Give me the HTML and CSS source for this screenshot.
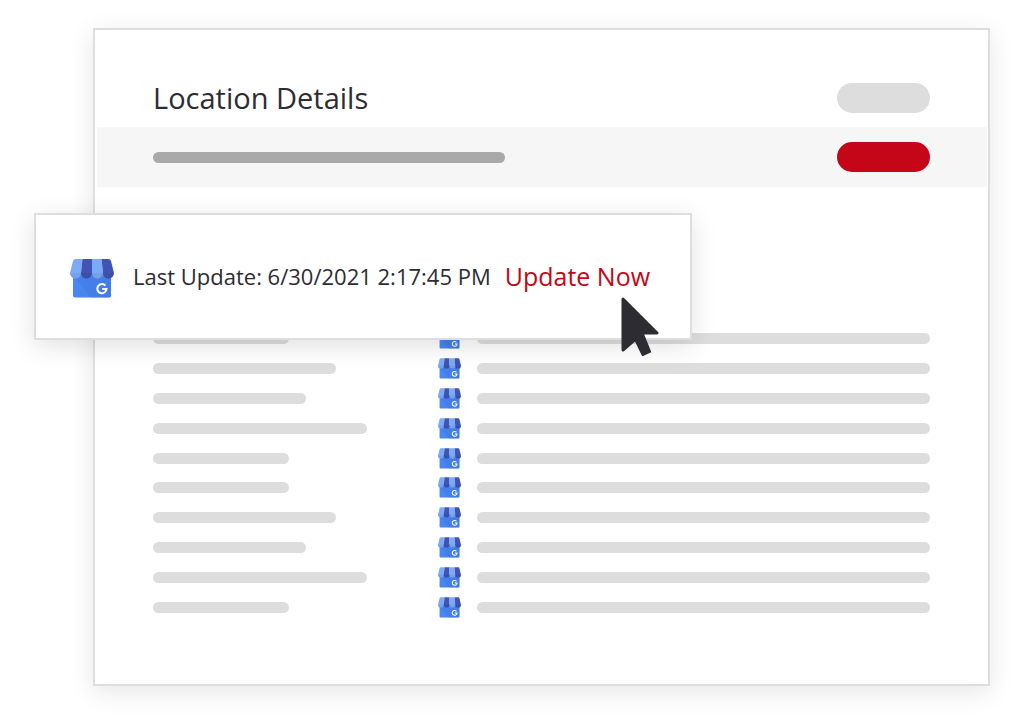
FILE: index.html
```
<!DOCTYPE html>
<html lang="en">
<head>
<meta charset="utf-8">
<meta name="viewport" content="width=device-width, initial-scale=1">
<title>Location Details</title>
<link rel="stylesheet" href="styles.css">
</head>
<body>
<svg class="sprite" aria-hidden="true">
  <defs>
    <linearGradient id="wall" x1="0" y1="0" x2="1" y2="0.6">
      <stop offset="0" stop-color="#4a8bf5"/>
      <stop offset="1" stop-color="#4680ea"/>
    </linearGradient>
    <symbol id="store" viewBox="0 0 44 39">
      <path fill="url(#wall)" d="M3 13h38v23.500a2 2 0 0 1-2 2H5a2 2 0 0 1-2-2z"/>
      <path fill="#3f76e0" opacity=".4" d="M4 18l17 20.500h18a2 2 0 0 0 2-2V17z"/>
      <path fill="#7baaf7" d="M5.500 0H12.500L11 14a5.500 5.500 0 0 1-11 0L3 2Q3.500 0 5.500 0z"/>
      <path fill="#4153b3" d="M12.500 0H22V14a5.500 5.500 0 0 1-11 0z"/>
      <path fill="#7baaf7" d="M22 0h9.500L33 14a5.500 5.500 0 0 1-11 0z"/>
      <path fill="#4153b3" d="M31.500 0H38.500Q40.500 0 41 2L44 14a5.500 5.500 0 0 1-11 0z"/>
      <path fill="#000" opacity=".05" d="M0 14h44a5.500 5.500 0 0 1-11 0a5.500 5.500 0 0 1-11 0a5.500 5.500 0 0 1-11 0a5.500 5.500 0 0 1-11 0z"/>
      <path fill="none" stroke="#fff" stroke-width="2" d="M35.400 26.700a4.600 4.600 0 1 0 1.100 3.300H32.200"/>
    </symbol>
  </defs>
</svg>
<main class="stage">
  <section class="card">
    <header class="card-head">
      <h1 class="title">Location Details</h1>
      <span class="pill"></span>
    </header>
    <div class="band">
      <span class="bar bar-dark"></span>
      <span class="pill pill-red"></span>
    </div>
    <ul class="rows">
      <li class="row"><span class="label"><span class="bar w-s"></span></span><svg class="icon"><use href="#store"/></svg><span class="bar fill"></span></li>
      <li class="row"><span class="label"><span class="bar w-l"></span></span><svg class="icon"><use href="#store"/></svg><span class="bar fill"></span></li>
      <li class="row"><span class="label"><span class="bar w-m"></span></span><svg class="icon"><use href="#store"/></svg><span class="bar fill"></span></li>
      <li class="row"><span class="label"><span class="bar w-xl"></span></span><svg class="icon"><use href="#store"/></svg><span class="bar fill"></span></li>
      <li class="row"><span class="label"><span class="bar w-s"></span></span><svg class="icon"><use href="#store"/></svg><span class="bar fill"></span></li>
      <li class="row"><span class="label"><span class="bar w-s"></span></span><svg class="icon"><use href="#store"/></svg><span class="bar fill"></span></li>
      <li class="row"><span class="label"><span class="bar w-l"></span></span><svg class="icon"><use href="#store"/></svg><span class="bar fill"></span></li>
      <li class="row"><span class="label"><span class="bar w-m"></span></span><svg class="icon"><use href="#store"/></svg><span class="bar fill"></span></li>
      <li class="row"><span class="label"><span class="bar w-xl"></span></span><svg class="icon"><use href="#store"/></svg><span class="bar fill"></span></li>
      <li class="row"><span class="label"><span class="bar w-s"></span></span><svg class="icon"><use href="#store"/></svg><span class="bar fill"></span></li>
    </ul>
  </section>
  <aside class="popup">
    <svg class="icon-lg"><use href="#store"/></svg>
    <span class="status">Last Update: 6/30/2021 2:17:45 PM</span>
    <button class="update" type="button">Update Now</button>
    <svg class="cursor" viewBox="0 0 38 60" aria-hidden="true">
      <path fill="#2d2c33" stroke="#2d2c33" stroke-width="3" stroke-linejoin="round" d="M2 2L36 36H21L28.500 54.500L22 57.500L14.500 42L2 53z"/>
    </svg>
  </aside>
</main>
</body>
</html>
```
FILE: styles.css
```
* {
  box-sizing: border-box;
}

body {
  margin: 0;
  background: #fff;
  color: #2d2c33;
  font-family: "Open Sans", "Noto Sans", sans-serif;
}

.sprite {
  position: absolute;
  width: 0;
  height: 0;
}

.stage {
  position: relative;
  padding: 28px 34px 39px 93px;
}

.card {
  padding-bottom: 62px;
  border: 2px solid #dedede;
  background: #fff;
  box-shadow: 0 6px 24px rgba(0, 0, 0, 0.1);
}

.card-head,
.band {
  display: flex;
  align-items: center;
  justify-content: space-between;
}

.card-head {
  padding: 38px 58px 0;
  height: 97px;
}

.title {
  margin: 0;
  font-size: 29px;
  font-weight: 400;
  line-height: 40px;
}

.band {
  height: 60px;
  margin: 0 1px 0 2px;
  padding: 0 57px 0 56px;
  background: #f6f6f6;
}

.pill {
  width: 93px;
  height: 30px;
  border-radius: 15px;
  background: #ddd;
}

.pill-red {
  background: #c40618;
}

.bar {
  display: block;
  height: 11px;
  border-radius: 6px;
  background: #ddd;
}

.bar-dark {
  width: 352px;
  background: #a9a9a9;
}

.rows {
  display: grid;
  grid-auto-rows: 1fr;
  height: 298px;
  margin: 137px 0 0;
  padding: 0 58px;
  list-style: none;
}

.row {
  display: flex;
  align-items: center;
}

.label {
  flex: 0 0 285px;
}

.w-s { width: 136px; }
.w-m { width: 153px; }
.w-l { width: 183px; }
.w-xl { width: 214px; }

.icon {
  flex: none;
  width: 23px;
  height: 21px;
  margin-right: 16px;
}

.fill {
  flex: 1;
}

.popup {
  position: absolute;
  top: 213px;
  left: 34px;
  display: flex;
  align-items: center;
  height: 127px;
  padding: 0 40px 2px 34px;
  border: 2px solid #dedede;
  background: #fff;
  box-shadow: 0 6px 24px rgba(0, 0, 0, 0.12);
  white-space: nowrap;
}

.icon-lg {
  width: 44px;
  height: 39px;
  margin: 5px 19px 0 0;
}

.status {
  margin-right: 14px;
  font-size: 22px;
  line-height: 30px;
}

.update {
  padding: 0;
  border: 0;
  background: none;
  color: #c40618;
  font: inherit;
  font-size: 25px;
  line-height: 36px;
  cursor: pointer;
}

.cursor {
  position: absolute;
  top: 82px;
  right: 31px;
  width: 38px;
  height: 60px;
}
```
